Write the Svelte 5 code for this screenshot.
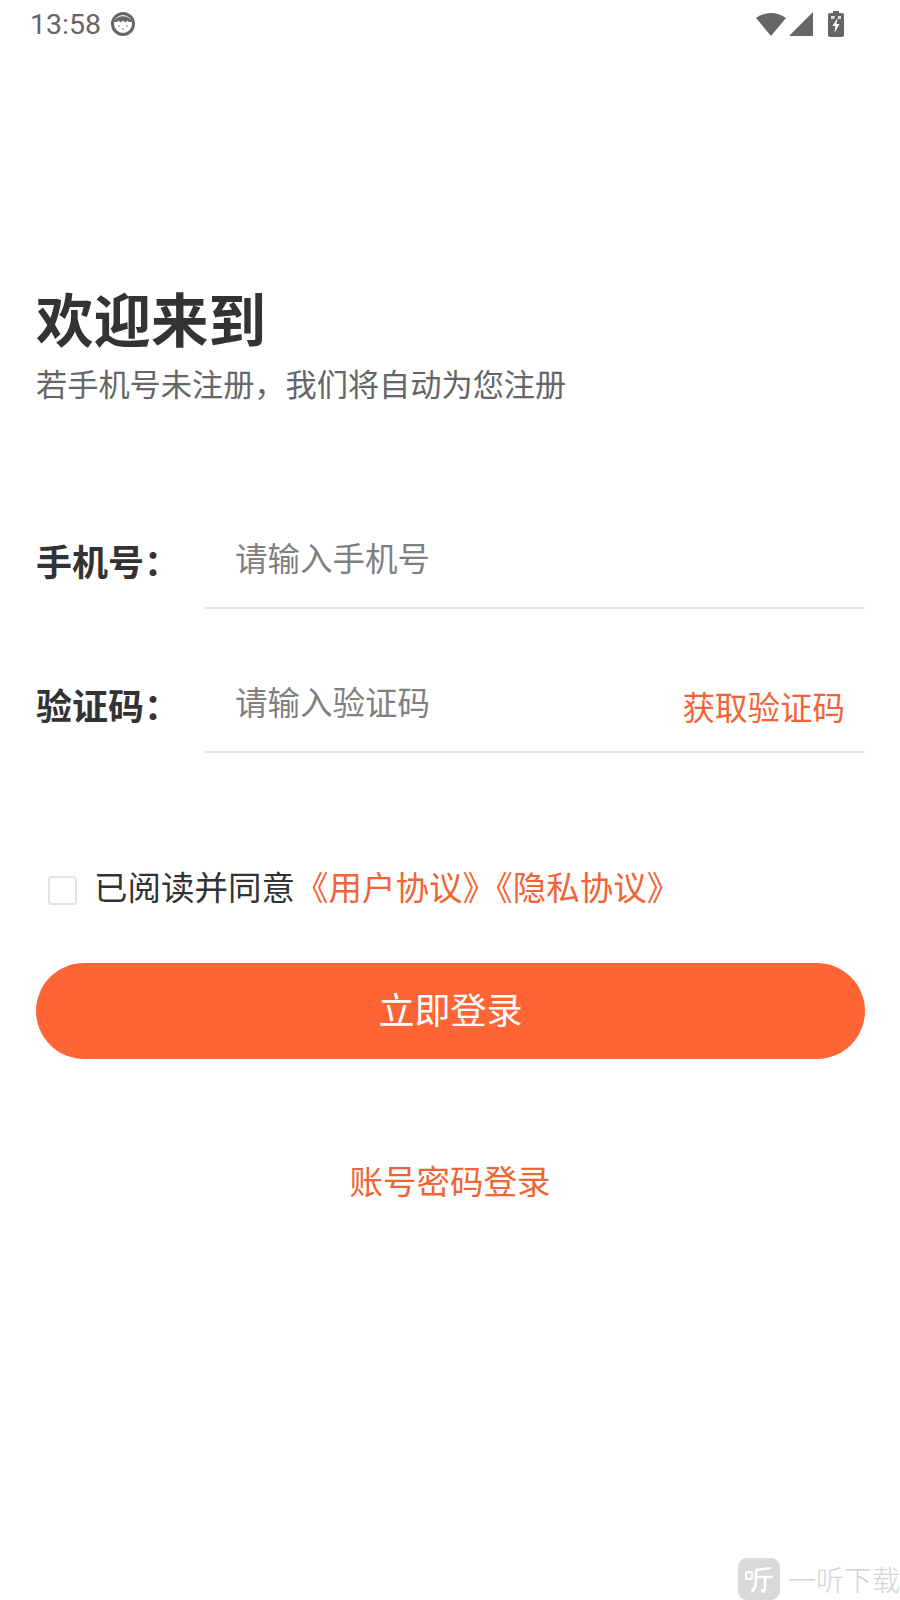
<script>
	let agreed = $state(false);
</script>

<main class="page">
	<header class="status-bar">
		<div class="status-left">
			<span class="time">13:58</span>
			<svg class="face" width="26" height="26" viewBox="0 0 26 26">
				<circle cx="13" cy="13" r="10.5" fill="#fff" stroke="#666" stroke-width="3" />
				<path d="M4 11 A10 10 0 0 1 22 11 L19 11 L17.500 9.500 L15.500 11.500 L13 9.500 L10.500 11.500 L8.500 9.500 L7 11 Z" fill="#666" />
				<circle cx="9" cy="15" r="1" fill="#aaa" />
				<circle cx="17" cy="15" r="1" fill="#aaa" />
				<circle cx="13" cy="18" r="1" fill="#aaa" />
			</svg>
		</div>
		<div class="status-right">
			<svg width="32" height="26" viewBox="0 0 32 26">
				<path d="M1 7 Q16 -3 31 7 L16 25 Z" fill="#666" />
			</svg>
			<svg width="26" height="26" viewBox="0 0 26 26">
				<path d="M1 25 L25 1 L25 25 Z" fill="#666" />
			</svg>
			<svg class="battery" width="16" height="26" viewBox="0 0 16 26">
				<path d="M5 0 H11 V2 H14 Q16 2 16 4 V24 Q16 26 14 26 H2 Q0 26 0 24 V4 Q0 2 2 2 H5 Z" fill="#666" />
				<path d="M3 5 H7 L6 8 H3 Z M10 5 H13 V8 H10 Z" fill="#ddd" />
				<path d="M9.500 7 L4.500 15 H7.500 L6.500 22 L11.500 13 H8.500 Z" fill="#fff" />
			</svg>
		</div>
	</header>

	<section class="welcome">
		<h1>欢迎来到</h1>
		<p>若手机号未注册，我们将自动为您注册</p>
	</section>

	<form class="form">
		<div class="field">
			<span class="label">手机号：</span>
			<div class="control">
				<span class="placeholder">请输入手机号</span>
			</div>
		</div>
		<div class="field">
			<span class="label">验证码：</span>
			<div class="control">
				<span class="placeholder">请输入验证码</span>
				<span class="get-code">获取验证码</span>
			</div>
		</div>
	</form>

	<label class="agree">
		<input type="checkbox" bind:checked={agreed} />
		<span class="agree-text">已阅读并同意<em>《用户协议》《隐私协议》</em></span>
	</label>

	<button class="login" type="button">立即登录</button>

	<div class="alt-login">账号密码登录</div>

	<footer class="watermark">
		<span class="wm-logo">
			<svg width="42" height="42" viewBox="0 0 42 42">
				<rect width="42" height="42" rx="9" fill="#d9d9d9" />
				<rect x="8" y="14" width="6" height="7" rx="1.500" fill="none" stroke="#fff" stroke-width="2" />
				<path d="M18 12 L33 10 M18 12 V20 Q18 27 16 31 M19 19 H35 M27 19 V33" fill="none" stroke="#fff" stroke-width="2.500" />
				<circle cx="15" cy="32" r="2" fill="#fff" />
				<circle cx="25" cy="33" r="2" fill="#fff" />
			</svg>
		</span>
		<span class="wm-text">一听下载</span>
	</footer>
</main>

<style>
	:global(body) {
		background: #fff;
	}

	.page {
		position: relative;
		width: 900px;
		height: 1600px;
		overflow: hidden;
		background: #fff;
		font-family: "Noto Sans CJK SC", "Noto Sans", sans-serif;
		color: #333;
	}

	.status-bar {
		display: flex;
		justify-content: space-between;
		align-items: center;
		height: 48px;
		padding: 0 56px 0 30px;
	}

	.status-left {
		display: flex;
		align-items: center;
		gap: 9px;
	}

	.time {
		font-family: Roboto, sans-serif;
		font-size: 28.500px;
		color: #666;
	}

	.status-right {
		display: flex;
		align-items: center;
		gap: 1px;
	}

	.battery {
		margin-left: 13px;
	}

	.welcome {
		margin: 234px 36px 0;
	}

	h1 {
		margin: 0;
		font-size: 57.500px;
		line-height: 70px;
		font-weight: 700;
		color: #333;
	}

	.welcome p {
		margin: 14px 0 0;
		font-size: 31.200px;
		line-height: 34px;
		color: #666;
	}

	.form {
		display: flex;
		flex-direction: column;
		gap: 44px;
		margin: 109px 35px 0 36px;
	}

	.field {
		display: flex;
		align-items: center;
		height: 100px;
	}

	.label {
		width: 169px;
		flex: none;
		font-size: 36px;
		font-weight: 700;
		color: #333;
		padding-top: 2px;
	}

	.control {
		flex: 1;
		display: flex;
		align-items: center;
		justify-content: space-between;
		height: 100%;
		padding: 0 20px 0 30px;
		border-bottom: 2px solid #e2e2e2;
		box-sizing: border-box;
	}

	.placeholder {
		font-size: 32.500px;
		color: #808080;
		padding-bottom: 4px;
	}

	.get-code {
		font-size: 32.500px;
		color: #f26436;
		padding-top: 6px;
	}

	.agree {
		display: flex;
		align-items: center;
		gap: 17px;
		margin: 109px 0 0 48px;
		font-size: 33.500px;
		line-height: 48px;
		color: #333;
	}

	.agree input {
		appearance: none;
		width: 29px;
		height: 29px;
		margin: 4px 0 0;
		background: #fff;
		border: 2px solid #e2e2e2;
		border-radius: 4px;
		box-sizing: border-box;
	}

	.agree-text {
		margin-bottom: 4px;
	}

	.agree em {
		font-style: normal;
		color: #f26436;
	}

	.login {
		display: block;
		width: 829px;
		height: 96px;
		margin: 49px 0 0 36px;
		padding: 0 0 6px;
		border: 0;
		border-radius: 48px;
		background: #ff6434;
		color: #fff;
		font-family: inherit;
		font-size: 36px;
	}

	.alt-login {
		margin-top: 97px;
		text-align: center;
		font-size: 33.500px;
		line-height: 48px;
		color: #f26436;
	}

	.watermark {
		position: absolute;
		right: 0;
		bottom: 0;
		display: flex;
		align-items: center;
		gap: 8px;
		height: 42px;
	}

	.wm-logo {
		display: flex;
	}

	.wm-text {
		font-size: 28px;
		color: #d4d4d4;
		font-weight: 300;
	}
</style>
